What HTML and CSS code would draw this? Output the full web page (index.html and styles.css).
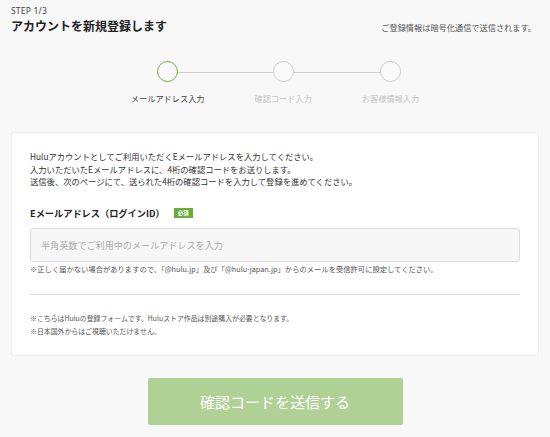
FILE: index.html
```html
<!DOCTYPE html>
<html lang="ja">
<head>
<meta charset="utf-8">
<link rel="stylesheet" href="styles.css">
</head>
<body>
<div class="page">
  <header class="head">
    <div class="head-left">
      <div class="step-no">STEP 1/3</div>
      <h1 class="title">アカウントを新規登録します</h1>
    </div>
    <div class="secure">ご登録情報は暗号化通信で送信されます。</div>
  </header>

  <ol class="steps">
    <li class="step active"><span class="dot"></span><span class="step-label">メールアドレス入力</span></li>
    <li class="step"><span class="dot"></span><span class="step-label">確認コード入力</span></li>
    <li class="step"><span class="dot"></span><span class="step-label">お客様情報入力</span></li>
  </ol>

  <section class="card">
    <p class="intro">Huluアカウントとしてご利用いただくEメールアドレスを入力してください。<br>入力いただいたEメールアドレスに、4桁の確認コードをお送りします。<br>送信後、次のページにて、送られた4桁の確認コードを入力して登録を進めてください。</p>
    <div class="field-label">Eメールアドレス（ログインID）<span class="req">必須</span></div>
    <input class="input" type="text" placeholder="半角英数でご利用中のメールアドレスを入力">
    <p class="hint">※正しく届かない場合がありますので、「@hulu.jp」及び「@hulu-japan.jp」からのメールを受信許可に設定してください。</p>
    <hr class="rule">
    <p class="notes">※こちらはHuluの登録フォームです。Huluストア作品は別途購入が必要となります。<br>※日本国外からはご視聴いただけません。</p>
  </section>

  <div class="actions">
    <button class="submit" type="button">確認コードを送信する</button>
  </div>
</div>
</body>
</html>
```

FILE: styles.css
```css
html, body {
  margin: 0;
  padding: 0;
  background: #f8f8f8;
}
body {
  font-family: "Noto Sans CJK JP", "Noto Sans", sans-serif;
  color: #333;
}
.page {
  width: 528px;
  margin: 0 11px;
  padding-top: 5px;
}
.head {
  display: flex;
  justify-content: space-between;
  align-items: flex-end;
}
.step-no {
  font-family: "Noto Sans", "Noto Sans CJK JP", sans-serif;
  font-size: 8.5px;
  line-height: 12px;
  color: #444;
  letter-spacing: 0.2px;
}
.title {
  margin: 1px 0 0;
  font-size: 12px;
  line-height: 16px;
  font-weight: 700;
  color: #222;
}
.secure {
  font-size: 8.2px;
  line-height: 12px;
  color: #555;
  margin-right: 3px;
  margin-bottom: 1px;
}
.steps {
  list-style: none;
  margin: 27px 0 0;
  padding: 0 0 0 0;
  display: flex;
  justify-content: center;
  gap: 50px;
  position: relative;
}
.steps::before {
  content: "";
  position: absolute;
  top: 11px;
  left: 156px;
  right: 148px;
  height: 1px;
  background: #cfcfcf;
}
.step {
  display: flex;
  flex-direction: column;
  align-items: center;
  position: relative;
}
.dot {
  width: 19px;
  height: 19px;
  border: 1.5px solid #cdcdcd;
  border-radius: 50%;
  background: #fafafa;
}
.step.active .dot {
  border-color: #72b03f;
}
.step-label {
  margin-top: 10px;
  font-size: 8.2px;
  line-height: 12px;
  color: #c4c4c4;
  white-space: nowrap;
}
.step.active .step-label {
  color: #444;
}
.card {
  margin-top: 28px;
  background: #fff;
  border: 1px solid #eeeeee;
  border-radius: 2px;
  padding: 17px 18px 17px;
}
.intro {
  margin: 0;
  font-size: 8.3px;
  line-height: 12.5px;
  color: #333;
}
.field-label {
  margin-top: 18px;
  font-size: 9.2px;
  line-height: 14px;
  font-weight: 700;
  color: #222;
  display: flex;
  align-items: center;
}
.req {
  margin-left: 9px;
  background: #6aac3c;
  color: #fff;
  font-size: 5.5px;
  font-weight: 700;
  line-height: 10px;
  padding: 0 4px;
}
.input {
  display: block;
  box-sizing: border-box;
  width: 100%;
  height: 34px;
  margin-top: 8px;
  padding: 0 10px;
  background: #f7f7f7;
  border: 1px solid #dcdcdc;
  border-radius: 3px;
  font-family: inherit;
  font-size: 9.1px;
  color: #333;
  outline: none;
}
.input::placeholder {
  color: #aaa;
}
.hint {
  margin: 2px 0 0;
  font-size: 7.3px;
  line-height: 10px;
  color: #555;
}
.rule {
  margin: 20px 0 0;
  border: 0;
  border-top: 1px solid #dadada;
}
.notes {
  margin: 17px 0 0;
  font-size: 6.9px;
  line-height: 13px;
  color: #555;
}
.actions {
  display: flex;
  justify-content: center;
  margin-top: 22px;
}
.submit {
  width: 255px;
  height: 47px;
  border: 0;
  border-radius: 2px;
  background: #b0d196;
  color: #fff;
  font-family: inherit;
  font-size: 15px;
  cursor: pointer;
}
```
